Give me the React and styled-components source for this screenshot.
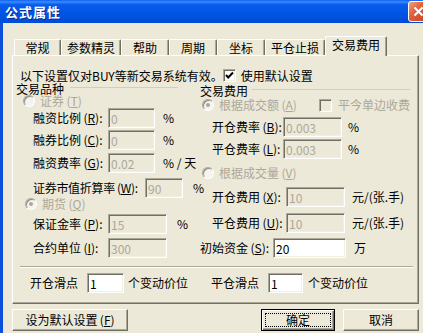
import React from "react";
import styled, { createGlobalStyle } from "styled-components";

const GlobalStyle = createGlobalStyle`
  html, body {
    margin: 0;
    padding: 0;
    background: #ECE9D8;
  }
  body {
    font-family: "Noto Sans CJK SC", "DejaVu Sans", sans-serif;
    font-size: 12px;
    line-height: 14px;
    color: #000;
  }
  * {
    box-sizing: border-box;
  }
`;

const Window = styled.div`
  width: 423px;
  height: 333px;
  overflow: hidden;
  background: #ECE9D8;
  display: flex;
  flex-direction: column;
`;

const TitleBar = styled.div`
  height: 23px;
  flex: none;
  display: flex;
  align-items: center;
  justify-content: space-between;
  padding-left: 5px;
  background: linear-gradient(180deg, #0A5FEE 0%, #3D8BFF 8%, #0A5CEB 20%, #0055E5 60%, #004BD6 100%);
`;

const Title = styled.span`
  color: #fff;
  font-weight: bold;
  font-size: 13px;
  letter-spacing: 1px;
  text-shadow: 1px 1px 0 #0A2A8C;
`;

const CloseBox = styled.div`
  width: 21px;
  height: 21px;
  margin-right: -6px;
  border: 1px solid #fff;
  border-radius: 3px;
  background: linear-gradient(135deg, #F0A088 0%, #E2603C 40%, #C8401C 100%);
  display: flex;
  align-items: center;
  justify-content: center;
`;

const Frame = styled.div`
  flex: 1;
  border-left: 3px solid #0B4FDB;
  padding: 13px 4px 0 9px;
  display: flex;
  flex-direction: column;
`;

const TabRow = styled.div`
  height: 20px;
  display: flex;
  padding-left: 2px;
  margin-bottom: -1px;
  position: relative;
  z-index: 1;
`;

const Tab = styled.div`
  width: ${(p) => p.$w}px;
  height: ${(p) => (p.$active ? 20 : 16)}px;
  margin-top: ${(p) => (p.$active ? 0 : 3)}px;
  display: flex;
  align-items: center;
  justify-content: center;
  background: #ECE9D8;
  border-top: 1px solid #fff;
  border-left: 1px solid #fff;
  border-right: 1px solid #716F64;
  border-radius: 2px 2px 0 0;
  box-shadow: inset -1px 0 0 #ACA899;
  padding-bottom: ${(p) => (p.$active ? 3 : 0)}px;
`;

const Panel = styled.div`
  border: 1px solid;
  border-color: #fff #716F64 #716F64 #fff;
  box-shadow: inset -1px -1px 0 #ACA899;
  padding: 12px 4px 10px 3px;
`;

const InfoRow = styled.div`
  height: 15px;
  display: flex;
  align-items: center;
  padding-left: 4px;
`;

const InfoText = styled.span`
  flex: 0 0 201px;
  white-space: nowrap;
`;

const Columns = styled.div`
  display: grid;
  grid-template-columns: 184px 1fr;
  align-items: start;
`;

const Column = styled.div`
  display: flex;
  flex-direction: column;
  padding-top: ${(p) => p.$pt || 0}px;
`;

const Row = styled.div`
  display: flex;
  align-items: center;
  height: ${(p) => p.$h || 20}px;
  margin-top: ${(p) => p.$mt || 0}px;
  padding-left: ${(p) => p.$pl || 0}px;
  line-height: 12px;
  white-space: nowrap;
`;

const GroupHeader = styled.div`
  display: flex;
  height: 12px;
  line-height: 12px;
  align-items: center;
  white-space: nowrap;
`;

const GroupLine = styled.span`
  width: ${(p) => p.$w}px;
  height: 1px;
  margin-left: ${(p) => p.$ml}px;
  margin-top: -3px;
  background: #D0D0BF;
`;

const Label = styled.span`
  width: ${(p) => p.$w}px;
  flex: none;
  letter-spacing: ${(p) => (p.$tight ? "-0.3px" : "normal")};
`;

const TextBox = styled.input`
  width: ${(p) => p.$w}px;
  height: ${(p) => p.$h || 20}px;
  flex: none;
  margin: 0;
  padding: 0 2px;
  font: inherit;
  font-size: 12px;
  color: ${(p) => (p.$off ? "#ACA899" : "#000")};
  background: ${(p) => (p.$off ? "#ECE9D8" : "#fff")};
  border: 1px solid;
  border-color: #ACA899 #fff #fff #ACA899;
  box-shadow: inset 1px 1px 0 #716F64, inset -1px -1px 0 #F1EFE2;
  outline: none;
`;

const Unit = styled.span`
  margin-left: ${(p) => p.$ml}px;
  white-space: pre;
`;

const OptionWrap = styled.span`
  display: inline-flex;
  align-items: center;
  width: ${(p) => (p.$w ? `${p.$w}px` : "auto")};
  color: ${(p) => (p.$off ? "#ACA899" : "#000")};
  flex: none;
`;

const RadioCircle = styled.span`
  width: 12px;
  height: 12px;
  border-radius: 50%;
  border: 1px solid;
  border-color: #ACA899 #fff #fff #ACA899;
  box-shadow: inset 1px 1px 0 #8E8C80;
  background: #F4F3EE;
  margin-right: 5px;
  display: flex;
  align-items: center;
  justify-content: center;
  &::after {
    content: "";
    width: 4px;
    height: 4px;
    border-radius: 50%;
    background: ${(p) => (p.$checked ? "#ACA899" : "transparent")};
  }
`;

const CheckSquare = styled.span`
  width: 13px;
  height: 13px;
  border: 1px solid;
  border-color: #ACA899 #fff #fff #ACA899;
  box-shadow: inset 1px 1px 0 #716F64, inset -1px -1px 0 #F1EFE2;
  background: ${(p) => (p.$off ? "#ECE9D8" : "#fff")};
  margin-right: ${(p) => p.$mr}px;
  display: flex;
  align-items: center;
  justify-content: center;
`;

const Separator = styled.div`
  height: 2px;
  margin: 8px 1px 0 4px;
  border-top: 1px solid #ACA899;
  border-bottom: 1px solid #fff;
`;

const SlipRow = styled.div`
  display: flex;
  align-items: center;
  height: 20px;
  margin-top: 5px;
  padding-left: 14px;
  white-space: nowrap;
`;

const Gap = styled.span`
  width: ${(p) => p.$w}px;
  flex: none;
`;

const ButtonRow = styled.div`
  display: flex;
  margin-top: 5px;
  gap: 8px;
`;

const Button = styled.div`
  width: ${(p) => p.$w}px;
  height: 22px;
  margin-right: ${(p) => (p.$push ? "auto" : "0")};
  display: flex;
  align-items: center;
  justify-content: center;
  position: relative;
  background: #ECE9D8;
  border: 1px solid;
  border-color: ${(p) => (p.$default ? "#000" : "#fff #716F64 #716F64 #fff")};
  box-shadow: ${(p) =>
    p.$default
      ? "inset 1px 1px 0 #fff, inset -1px -1px 0 #716F64, inset -2px -2px 0 #ACA899"
      : "inset -1px -1px 0 #ACA899"};
  &::after {
    content: "";
    display: ${(p) => (p.$default ? "block" : "none")};
    position: absolute;
    inset: 3px;
    border: 1px dotted #000;
  }
`;

const Key = ({ k }) => (
  <>
    {"\u2009"}(<u>{k}</u>)
  </>
);

const Radio = ({ label, k, checked, w }) => (
  <OptionWrap $off $w={w}>
    <RadioCircle $checked={checked} />
    {label}
    <Key k={k} />
  </OptionWrap>
);

const Check = ({ label, checked, off }) => (
  <OptionWrap $off={off}>
    <CheckSquare $off={off} $mr={off ? 6 : 5}>
      {checked && (
        <svg width="9" height="9" viewBox="0 0 9 9">
          <polyline points="1,4 3.2,6.5 8,1.5" fill="none" stroke="#000" strokeWidth="2" />
        </svg>
      )}
    </CheckSquare>
    {label}
  </OptionWrap>
);

const Field = ({ label, k, lw, iw, value, off = true, unit, uml, mt, pl, tight }) => (
  <Row $mt={mt} $pl={pl}>
    <Label $w={lw} $tight={tight}>
      {label}
      <Key k={k} />:
    </Label>
    <TextBox $w={iw} $off={off} value={value} readOnly />
    {unit && <Unit $ml={uml}>{unit}</Unit>}
  </Row>
);

const TABS = [
  { name: "常规", w: 47 },
  { name: "参数精灵", w: 60 },
  { name: "帮助", w: 48 },
  { name: "周期", w: 48 },
  { name: "坐标", w: 48 },
  { name: "平仓止损", w: 60 },
  { name: "交易费用", w: 62, active: true },
];

export default function App() {
  return (
    <>
      <GlobalStyle />
      <Window>
        <TitleBar>
          <Title>公式属性</Title>
          <CloseBox>
            <svg width="11" height="11" viewBox="0 0 11 11">
              <path d="M1.5 1.5 L9.5 9.5 M9.5 1.5 L1.5 9.5" stroke="#fff" strokeWidth="2" />
            </svg>
          </CloseBox>
        </TitleBar>
        <Frame>
          <TabRow>
            {TABS.map((t) => (
              <Tab key={t.name} $w={t.w} $active={t.active}>
                {t.name}
              </Tab>
            ))}
          </TabRow>
          <Panel>
            <InfoRow>
              <InfoText>以下设置仅对BUY等新交易系统有效。</InfoText>
              <Check label="使用默认设置" checked />
            </InfoRow>
            <Columns>
              <Column>
                <GroupHeader>
                  交易品种
                  <GroupLine $ml={6} $w={108} />
                </GroupHeader>
                <Row $h={12} $pl={7}>
                  <Radio label="证券" k="T" />
                </Row>
                <Field label="融资比例" k="R" lw={75} iw={47} value="0" unit="%" uml={8} mt={1} pl={17} />
                <Field label="融券比例" k="C" lw={75} iw={47} value="0" unit="%" uml={8} mt={2} pl={17} />
                <Field label="融资费率" k="G" lw={75} iw={47} value="0.02" unit="% / 天" uml={8} mt={3} pl={17} />
                <Field label="证券市值折算率" k="W" lw={112} iw={38} value="90" unit="%" uml={10} mt={5} pl={17} tight />
                <Row $h={12} $pl={9}>
                  <Radio label="期货" k="Q" checked />
                </Row>
                <Field label="保证金率" k="P" lw={75} iw={59} value="15" unit="%" uml={10} mt={4} pl={17} />
                <Field label="合约单位" k="I" lw={75} iw={59} value="300" mt={4} pl={17} />
              </Column>
              <Column $pt={2}>
                <GroupHeader>
                  交易费用
                  <GroupLine $ml={4} $w={158} />
                </GroupHeader>
                <Row $h={16} $pl={2}>
                  <Radio label="根据成交额" k="A" checked w={117} />
                  <Check label="平今单边收费" off />
                </Row>
                <Field label="开仓费率" k="B" lw={71} iw={59} value="0.003" unit="%" uml={6} mt={4} pl={12} />
                <Field label="平仓费率" k="L" lw={71} iw={59} value="0.003" unit="%" uml={6} mt={2} pl={12} />
                <Row $h={12} $mt={8} $pl={2}>
                  <Radio label="根据成交量" k="V" />
                </Row>
                <Field label="开仓费用" k="X" lw={74} iw={59} value="10" unit="元/(张.手)" uml={7} mt={8} pl={12} />
                <Field label="平仓费用" k="U" lw={74} iw={59} value="10" unit="元/(张.手)" uml={7} mt={6} pl={12} />
                <Field label="初始资金" k="S" lw={73} iw={73} value="20" off={false} unit="万" uml={8} mt={5} />
              </Column>
            </Columns>
            <Separator />
            <SlipRow>
              <Label $w={57}>开仓滑点</Label>
              <TextBox $w={37} value="1" readOnly />
              <Gap $w={4} />
              <Label $w={83}>个变动价位</Label>
              <Label $w={57}>平仓滑点</Label>
              <TextBox $w={35} value="1" readOnly />
              <Gap $w={5} />
              <span>个变动价位</span>
            </SlipRow>
          </Panel>
          <ButtonRow>
            <Button $w={116} $push>
              设为默认设置<Key k="F" />
            </Button>
            <Button $w={74} $default>
              确定
            </Button>
            <Button $w={76}>取消</Button>
          </ButtonRow>
        </Frame>
      </Window>
    </>
  );
}
